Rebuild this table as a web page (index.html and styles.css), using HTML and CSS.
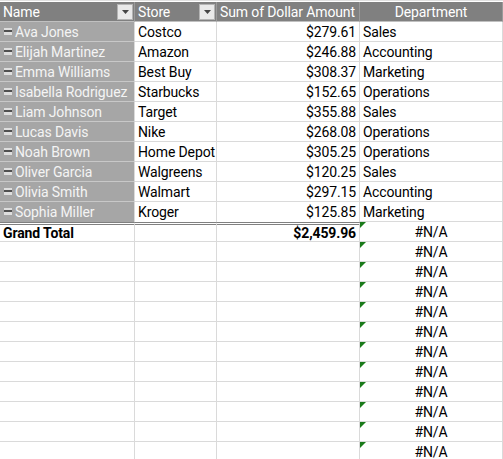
FILE: index.html
```html
<!DOCTYPE html>
<html>
<head>
<meta charset="utf-8">
<link rel="stylesheet" href="styles.css">
</head>
<body>
<div class="sheet">
  <div class="cell hdr">Name<span class="dd"><svg width="7" height="4" viewBox="0 0 7 4"><path d="M0 0h7L3.5 4z" fill="#444"/></svg></span></div>
  <div class="cell hdr">Store<span class="dd"><svg width="7" height="4" viewBox="0 0 7 4"><path d="M0 0h7L3.5 4z" fill="#444"/></svg></span></div>
  <div class="cell hdr">Sum of Dollar Amount</div>
  <div class="cell hdr center">Department</div>

  <div class="cell nm"><i class="mn"></i>Ava Jones</div><div class="cell">Costco</div><div class="cell num">$279.61</div><div class="cell">Sales</div>
  <div class="cell nm"><i class="mn"></i>Elijah Martinez</div><div class="cell">Amazon</div><div class="cell num">$246.88</div><div class="cell">Accounting</div>
  <div class="cell nm"><i class="mn"></i>Emma Williams</div><div class="cell">Best Buy</div><div class="cell num">$308.37</div><div class="cell">Marketing</div>
  <div class="cell nm"><i class="mn"></i>Isabella Rodriguez</div><div class="cell">Starbucks</div><div class="cell num">$152.65</div><div class="cell">Operations</div>
  <div class="cell nm"><i class="mn"></i>Liam Johnson</div><div class="cell">Target</div><div class="cell num">$355.88</div><div class="cell">Sales</div>
  <div class="cell nm"><i class="mn"></i>Lucas Davis</div><div class="cell">Nike</div><div class="cell num">$268.08</div><div class="cell">Operations</div>
  <div class="cell nm"><i class="mn"></i>Noah Brown</div><div class="cell">Home Depot</div><div class="cell num">$305.25</div><div class="cell">Operations</div>
  <div class="cell nm"><i class="mn"></i>Oliver Garcia</div><div class="cell">Walgreens</div><div class="cell num">$120.25</div><div class="cell">Sales</div>
  <div class="cell nm"><i class="mn"></i>Olivia Smith</div><div class="cell">Walmart</div><div class="cell num">$297.15</div><div class="cell">Accounting</div>
  <div class="cell nm last"><i class="mn"></i>Sophia Miller</div><div class="cell last">Kroger</div><div class="cell num last">$125.85</div><div class="cell">Marketing</div>

  <div class="cell gt bold">Grand Total</div><div class="cell gt"></div><div class="cell gt num bold">$2,459.96</div><div class="cell na">#N/A</div>

  <div class="cell"></div><div class="cell"></div><div class="cell"></div><div class="cell na">#N/A</div>
  <div class="cell"></div><div class="cell"></div><div class="cell"></div><div class="cell na">#N/A</div>
  <div class="cell"></div><div class="cell"></div><div class="cell"></div><div class="cell na">#N/A</div>
  <div class="cell"></div><div class="cell"></div><div class="cell"></div><div class="cell na">#N/A</div>
  <div class="cell"></div><div class="cell"></div><div class="cell"></div><div class="cell na">#N/A</div>
  <div class="cell"></div><div class="cell"></div><div class="cell"></div><div class="cell na">#N/A</div>
  <div class="cell"></div><div class="cell"></div><div class="cell"></div><div class="cell na">#N/A</div>
  <div class="cell"></div><div class="cell"></div><div class="cell"></div><div class="cell na">#N/A</div>
  <div class="cell"></div><div class="cell"></div><div class="cell"></div><div class="cell na">#N/A</div>
  <div class="cell"></div><div class="cell"></div><div class="cell"></div><div class="cell na">#N/A</div>
  <div class="cell"></div><div class="cell"></div><div class="cell"></div><div class="cell na">#N/A</div>
</div>
</body>
</html>
```
FILE: styles.css
```css
html, body {
  margin: 0;
  padding: 0;
  background: #ffffff;
  overflow: hidden;
}
.sheet {
  display: grid;
  grid-template-columns: 135px 82px 143px 143px;
  grid-auto-rows: 20px;
  padding-top: 1px;
  border-top: 1px solid #e0e0e0;
  font-family: "Roboto", sans-serif;
  font-size: 14px;
  letter-spacing: -0.12px;
  color: #000;
}
.cell {
  position: relative;
  box-sizing: border-box;
  border-right: 1px solid #dadada;
  border-bottom: 1px solid #dadada;
  padding: 0 3px;
  line-height: 21px;
  white-space: nowrap;
  overflow: hidden;
}
.hdr {
  background: #808080;
  color: #ffffff;
  border-bottom-color: #c0c0c0;
  border-right-color: #9a9a9a;
}
.center { text-align: center; }
.num { text-align: right; }
.bold { font-weight: bold; }
.nm {
  background: #a6a6a6;
  color: #f4f4f4;
  padding-left: 4px;
  border-bottom-color: #c8c8c8;
}
.mn {
  display: inline-block;
  width: 8px;
  height: 7px;
  margin-right: 3px;
  vertical-align: 2px;
  background: linear-gradient(to bottom, #dedede 0, #dedede 2px, #505050 2px, #505050 4px, #dedede 4px);
}
.dd {
  position: absolute;
  right: 1px;
  top: 2px;
  width: 16px;
  height: 16px;
  box-sizing: border-box;
  background: #e9e9e9;
  border: 1px solid #b4b4b4;
  display: flex;
  align-items: center;
  justify-content: center;
}
.last {
  border-bottom: none;
}
.gt {
  border-top: 3px double #808080;
  line-height: 16px;
}
.na {
  text-align: center;
}
.na::before {
  content: "";
  position: absolute;
  left: 0;
  top: 0;
  width: 0;
  height: 0;
  border-top: 6px solid #1a7a1a;
  border-right: 6px solid transparent;
}
```
